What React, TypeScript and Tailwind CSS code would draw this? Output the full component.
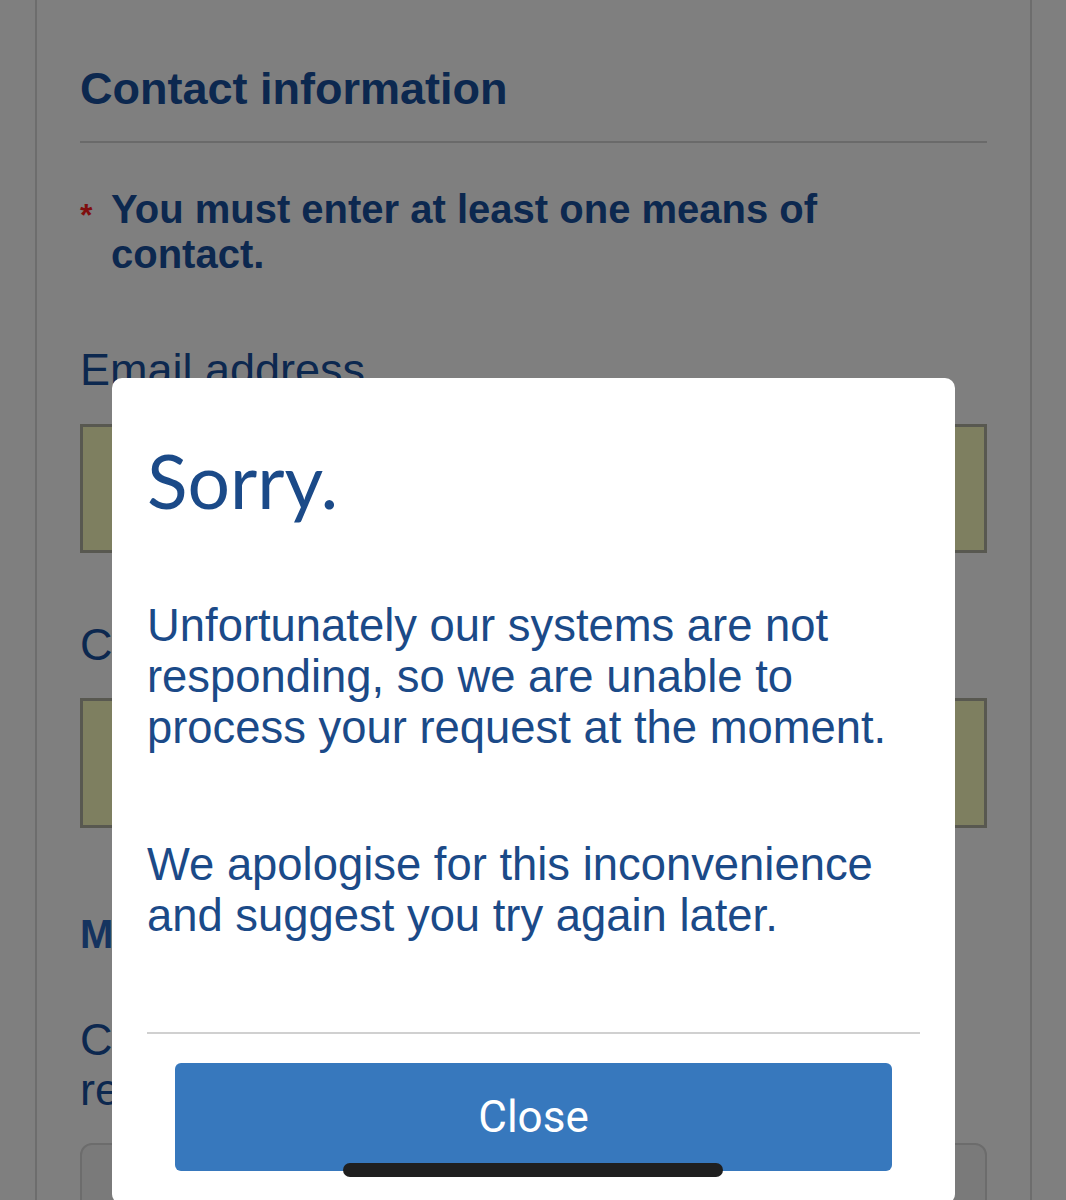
export default function App() {
  return (
    <div className="relative h-[1200px] w-full overflow-hidden bg-white font-['Liberation_Sans',Arial,sans-serif]">
      {/* page behind the dialog */}
      <div className="ml-[35px] h-full w-[997px] border-x-2 border-[#dadada] px-[43px] pt-[66px] text-[#18509f]">
        <h2 className="text-[45px] font-bold leading-[46px]">Contact information</h2>
        <hr className="mt-[29px] border-t-2 border-[#d4d4d4]" />

        <div className="mt-[44px] flex text-[40px] font-bold leading-[45px]">
          <span className="w-[31px] shrink-0 pt-[6px] text-[32px] leading-[45px] text-[#ff1c1c]">*</span>
          <p className="max-w-[760px]">You must enter at least one means of contact.</p>
        </div>

        <label className="mt-[68px] block text-[45px] leading-[50px]">Email address</label>
        <div className="mt-[29px] h-[129px] border-[3px] border-[#b0b0a0] bg-[#fcffc0]" />

        <label className="mt-[67px] block text-[45px] leading-[50px]">Contact number</label>
        <div className="mt-[28px] h-[130px] border-[3px] border-[#b0b0a0] bg-[#fcffc0]" />

        <h3 className="mt-[84px] text-[40px] font-bold leading-[45px] text-[#2a66bf]">More about you</h3>
        <p className="mt-[58px] text-[45px] leading-[50px]">
          Can we contact you to take part in
          <br />
          research about our services?
        </p>
        <div className="mt-[28px] h-[120px] rounded-[12px] border-2 border-[#d8d8d8] bg-[#f4f4f4]" />
      </div>

      {/* overlay */}
      <div className="absolute inset-0 bg-black/50" />

      {/* dialog */}
      <div className="absolute left-[112px] top-[378px] flex h-[826px] w-[843px] flex-col rounded-[10px] bg-white px-[35px] pt-[64px] text-[#1b4a88]">
        <h1 className="font-['Lato',sans-serif] text-[75px] font-normal leading-[76px]">Sorry.</h1>
        <p className="mt-[82px] text-[45.4px] leading-[51px]">
          Unfortunately our systems are not responding, so we are unable to process your request at the moment.
        </p>
        <p className="mt-[86px] text-[45.4px] leading-[51px]">
          We apologise for this inconvenience and suggest you try again later.
        </p>
        <div className="mt-[91px] h-[2px] bg-[#d0d0d0]" />
        <div className="mt-[29px] px-[28px]">
          <button className="flex h-[108px] w-full items-center justify-center rounded-[6px] bg-[#3778bd] font-['Roboto',sans-serif] text-[44px] text-white">
            Close
          </button>
        </div>
      </div>

      {/* home indicator */}
      <div className="absolute left-[343px] top-[1163px] h-[14px] w-[380px] rounded-full bg-[#1f1f1f]" />
    </div>
  )
}
